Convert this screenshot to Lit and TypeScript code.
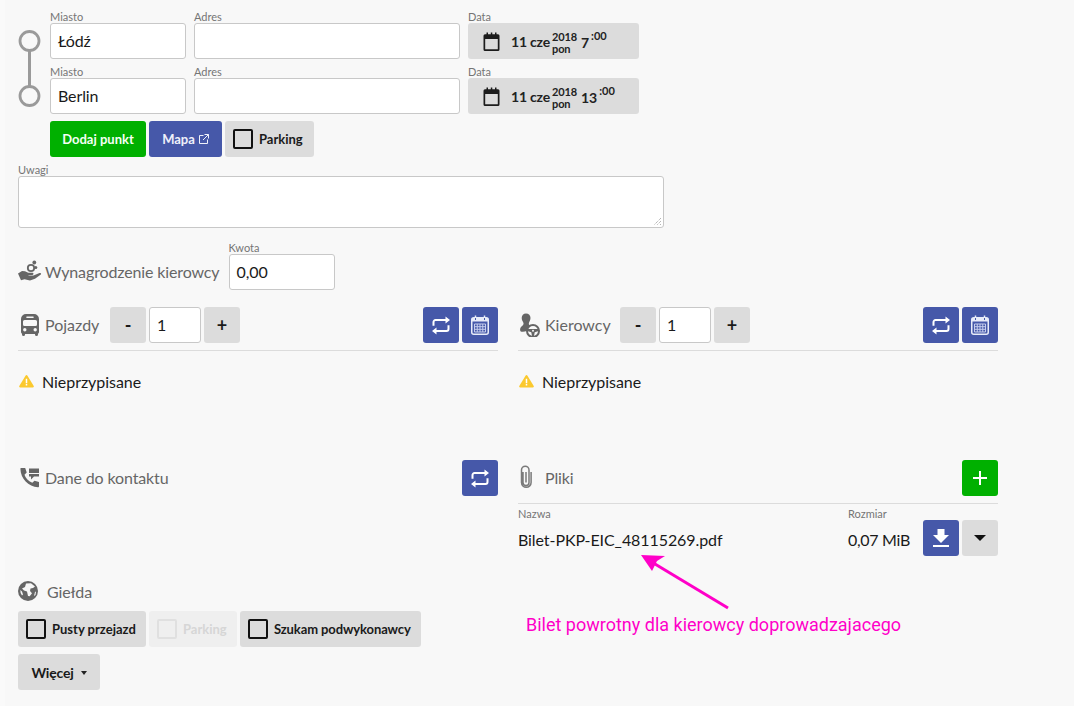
import { LitElement, html, css } from "lit";
import { customElement } from "lit/decorators.js";

const swapIcon = html`<svg class="swap" viewBox="0 0 18 19"><path fill="none" stroke="#fff" stroke-width="2" d="M1.500 9.800V6a2 2 0 0 1 2-2H14M16.500 9.200V13a2 2 0 0 1-2 2H4"/><path fill="#fff" d="M13.500 .5L18 4l-4.500 3.500zM4.500 11.500L0 15l4.500 3.500z"/></svg>`;
const calGridIcon = html`<svg class="grid" viewBox="0 0 18 20"><rect x=".75" y="2.750" width="16.500" height="16.500" rx="2" fill="none" stroke="#e8ebf8" stroke-width="1.500"/><path fill="#e8ebf8" d="M1 3h16v3.500H1z"/><path stroke="#e8ebf8" stroke-width="1.500" d="M4.500 .5v3.500M13.500 .5v3.500"/><path stroke="#4658a9" d="M4.500 3v2M13.500 3v2"/><path fill="none" stroke="#c6cdec" d="M3.500 9h11v8h-11zM3.500 11.700h11M3.500 14.300h11M6.250 9v8M9 9v8M11.750 9v8"/></svg>`;
const calIcon = html`<svg class="cal" viewBox="0 0 17 19"><path fill="#1c1c1c" d="M3.500 .5h1.500v1.700h2.800V.5h1.500v1.700h2.700V.5h1.500v1.700h1.500A1.500 1.500 0 0 1 16.500 3.700v13.800a1.500 1.500 0 0 1-1.500 1.500H2a1.500 1.500 0 0 1-1.500-1.500V3.700A1.500 1.500 0 0 1 2 2.200h1.500zM2.200 7v10.300h12.600V7z"/></svg>`;

@customElement("app-root")
export class AppRoot extends LitElement {
  static styles = css`
    :host { display: block; height: 706px; overflow: hidden; background: #f8f8f8; font-family: Lato, sans-serif; color: #1a1a1a; }
    * { box-sizing: border-box; }
    .page { padding: 11px 0 0 13px; border-left: 5px solid #fafafa; width: 1000px; position: relative; height: 706px; }
    .route { display: flex; }
    .rail { width: 32px; flex: none; padding-top: 19px; display: flex; flex-direction: column; align-items: flex-start; }
    .rail svg { display: block; }
    .rows { display: flex; flex-direction: column; gap: 7px; }
    .row { display: flex; gap: 8px; }
    .lab { display: block; height: 12px; font-size: 11px; line-height: 12px; color: #757575; white-space: nowrap; }
    .inp { height: 36px; background: #fff; border: 1px solid #c8c8c8; border-radius: 3px; font-size: 16px; line-height: 34px; padding-left: 7px; color: #1a1a1a; letter-spacing: -.1px; }
    .miasto { width: 136px; }
    .adres { width: 266px; }
    .date { width: 171px; height: 36px; background: #dcdcdc; border-radius: 3px; display: flex; align-items: center; padding-left: 15px; font-weight: 700; font-size: 14px; color: #222; letter-spacing: -.2px; }
    .cal { width: 17px; height: 19px; margin-right: 11px; flex: none; }
    .yr { display: flex; flex-direction: column; font-size: 11px; line-height: 12px; margin-left: 2px; width: 29px; margin-top: 3px; letter-spacing: -.1px; }
    .hour { font-size: 14px; margin-top: 2px; letter-spacing: 0; }
    .min { font-size: 11px; margin-left: 2px; margin-top: -11px; letter-spacing: 0; }
    .btnrow { display: flex; gap: 3px; margin-top: 7px; }
    .btn { height: 36px; border-radius: 3px; display: flex; align-items: center; justify-content: center; font-weight: 700; font-size: 13px; white-space: nowrap; flex: none; }
    .green { background: #00b000; color: #f4fff4; }
    .blue { background: #4658a9; color: #eef0fa; }
    .grey { background: #dcdcdc; color: #1a1a1a; }
    .dim { background: #efefef; color: #d6d6d6; }
    .box { width: 20px; height: 20px; border: 2px solid #111; border-radius: 2px; margin-right: 6px; flex: none; }
    .dim .box { border-color: #e0e0e0; }
    .check { padding: 0 11px 0 8px; }
    .tight { letter-spacing: -.1px; }
    .sign { font-size: 18px; }
    .uwagi { margin-top: 7px; }
    .area { width: 646px; height: 52px; background: #fff; border: 1px solid #c8c8c8; border-radius: 3px; position: relative; }
    .grip { position: absolute; right: 1px; bottom: 1px; width: 9px; height: 9px; }
    .pay { display: flex; align-items: flex-end; margin-top: 14px; }
    .pay .kw { margin-left: 9px; }
    .kwota { width: 106px; }
    .title { display: flex; align-items: center; font-size: 16px; color: #666; white-space: nowrap; letter-spacing: -.13px; padding-bottom: 2px; }
    .tic { width: 27px; flex: none; display: flex; justify-content: flex-start; }
    .paytitle { height: 36px; }
    .cols { display: grid; grid-template-columns: 480px 480px; column-gap: 20px; margin-top: 17px; }
    .head { display: flex; align-items: center; gap: 3px; height: 36px; }
    .head .count { letter-spacing: 0; }
    .pojazdy { width: 89px; }
    .kierowcy { width: 99px; }
    .sq { width: 36px; }
    .num { width: 52px; }
    .sp { flex: 1; }
    .rule { height: 1px; background: #dcdcdc; margin-top: 7px; }
    .warn { display: flex; align-items: center; height: 20px; margin-top: 20px; font-size: 16px; letter-spacing: -.05px; }
    .warn svg { margin-right: 8px; margin-left: 1px; }
    .secs { display: grid; grid-template-columns: 480px 480px; column-gap: 20px; margin-top: 69px; }
    .files { display: flex; }
    .fname { width: 330px; }
    .fsize { width: 75px; }
    .val { height: 36px; display: flex; align-items: center; font-size: 16px; white-space: nowrap; letter-spacing: -.08px; padding-top: 2px; }
    .fsize .val { letter-spacing: -.3px; }
    .fbtns { display: flex; gap: 3px; margin-top: 16px; }
    .market { margin-top: 25px; }
    .market .title { height: 20px; padding-bottom: 0; }
    .mrow { display: flex; gap: 3px; margin-top: 10px; }
    .mrow .check { padding-right: 10.200px; }
    .more { width: 82px; margin-top: 7px; font-size: 14px; letter-spacing: -.2px; }
    .caret { width: 0; height: 0; border-left: 3.500px solid transparent; border-right: 3.500px solid transparent; border-top: 4px solid #222; margin: 2px 0 0 7px; }
    .caret2 { border-left-width: 6px; border-right-width: 6px; border-top-width: 6px; margin: 0; border-top-color: #111; }
    .swap { width: 18px; height: 19px; }
    .grid { width: 18px; height: 20px; }
    .note { position: absolute; left: 521px; top: 613px; color: #ff00c8; font-family: Roboto, sans-serif; font-size: 18px; line-height: 24px; white-space: nowrap; }
    .arrow { position: absolute; left: 625px; top: 545px; width: 110px; height: 75px; }
  `;

  private rowT(city: string, hour: string) {
    return html`<div class="row">
      <div><span class="lab">Miasto</span><div class="inp miasto">${city}</div></div>
      <div><span class="lab">Adres</span><div class="inp adres"></div></div>
      <div><span class="lab">Data</span><div class="date">${calIcon}<span>11 cze</span>
        <span class="yr"><span>2018</span><span>pon</span></span>
        <span class="hour">${hour}</span><span class="min">:00</span></div></div>
    </div>`;
  }

  private counter(title: string, cls: string, icon: unknown) {
    return html`<div>
      <div class="head">
        <div class="title count ${cls}"><span class="tic">${icon}</span>${title}</div>
        <div class="btn grey sq sign">-</div><div class="inp num">1</div><div class="btn grey sq sign">+</div>
        <div class="sp"></div>
        <div class="btn blue sq">${swapIcon}</div><div class="btn blue sq">${calGridIcon}</div>
      </div>
      <div class="rule"></div>
      <div class="warn"><svg width="15" height="14" viewBox="0 0 16 14"><path fill="#fbc92e" d="M8 .5a1 1 0 0 1 .9.500l6.800 11.300a1 1 0 0 1-.9 1.500H1.200a1 1 0 0 1-.9-1.500L7.100 1A1 1 0 0 1 8 .5z"/><path fill="#fff" d="M7.200 4.500h1.600v4.500H7.200zM7.200 10h1.600v1.700H7.200z"/></svg>Nieprzypisane</div>
    </div>`;
  }

  render() {
    const bus = html`<svg width="22" height="24" viewBox="-2 0 22 24"><path fill="#666" fill-rule="evenodd" d="M6 2h8a5 5 0 0 1 5 5v13a2 2 0 0 1-1 1.700v.8a1.500 1.500 0 0 1-3 0V22H5v.5a1.500 1.500 0 0 1-3 0v-.8A2 2 0 0 1 1 20V7a5 5 0 0 1 5-5zM7 4.500a.8.8 0 0 0 0 1.600h6a.8.8 0 0 0 0-1.600zM4.500 8A1.500 1.500 0 0 0 3 9.500v3A1.500 1.500 0 0 0 4.500 14h11a1.500 1.500 0 0 0 1.500-1.500v-3A1.500 1.500 0 0 0 15.500 8zM4.800 16a1.700 1.700 0 1 0 0 3.400 1.700 1.700 0 0 0 0-3.400zm10.400 0a1.700 1.700 0 1 0 0 3.400 1.700 1.700 0 0 0 0-3.400z"/></svg>`;
    const driver = html`<svg width="24" height="26" viewBox="0 -1 24 26"><path fill="#666" d="M8 1.500c2.800 0 4.500 2 4.500 4.500 0 2.700-1.700 4.200-1.700 5.700 0 .8.500 1.300 1.500 1.700a7.800 7.800 0 0 0-3.300 5.400c-2 .9-4.500 1.100-6.300.6C1.500 18 2 15.500 4 14c1-.8 1.700-1.500 1.500-2.800C5.200 9.500 3.700 8.500 3.700 6c0-2.500 1.700-4.500 4.300-4.500z"/><circle cx="15" cy="19" r="6" fill="none" stroke="#666" stroke-width="2"/><path fill="#666" d="M10 17h10v2.300l-3.300 1-.7 3.700h-2l-.7-3.700-3.300-1z"/><circle cx="15" cy="18.700" r="1" fill="#f8f8f8"/></svg>`;
    const phone = html`<svg width="22" height="21" viewBox="-2 0 22 21"><path fill="#666" d="M1 1h4.200l1.500 4.500-2.200 2.200c.9 3 3.600 6.300 7.800 8l2.200-2 4.500 1.300v4.200c0 .6-.4 1-1 1C8.500 20 .5 11.500.400 1.800.4 1.300.6 1 1 1z"/><path fill="#666" d="M9 1.500h10v8h-5L11 12.500v-3H9z" /><path stroke="#f8f8f8" stroke-width="1" d="M9 6.500h10" /></svg>`;
    const clip = html`<svg width="16" height="24" viewBox="0 0 16 24"><path fill="none" stroke="#7a7a7a" stroke-width="1.500" d="M5 7v10.500a3 3 0 0 0 6 0V5a3.700 3.700 0 0 0-7.500 0v12.500a4.800 4.800 0 0 0 9.600 0V7M8 7v10.500"/></svg>`;
    const globe = html`<svg width="20" height="20" viewBox="0 0 20 20"><circle cx="10" cy="10" r="10" fill="#666"/><path fill="#f8f8f8" d="M8 2.500l5-.3 4 3.300-2 1.500-2.500.5-.5 2.500 2 2.200-2.300 3-1.700-.3-1-4.500L6 9.500 4 7.500l3-1.500zM2.300 9l1.700 1.500 1 3-1 1a8 8 0 0 1-1.700-5.500zM17 11l1-.5-.5 3.500-1.500 1z"/></svg>`;
    const hand = html`<svg width="25" height="24" viewBox="0 0 25 24"><path fill="#666" d="M0 14.500l4-2.500 3 .3 3.200 1.500h4.300c1.300 0 1.300 2 0 2.100l-4 .3v.6l5-.2 6-2.600c1.500-.5 2.200.8 1 1.700l-5.500 4-5 1.800-5.500-1.200-3.500 1z"/><circle cx="13" cy="9" r="3.200" fill="none" stroke="#666" stroke-width="1.800"/><circle cx="17.800" cy="8.500" r="1.500" fill="#666"/><circle cx="16.300" cy="3.500" r="1.900" fill="#666"/></svg>`;
    const download = html`<svg width="18" height="20" viewBox="0 0 18 20"><path fill="#fff" d="M5.500 1h7v6H17l-8 8-8-8h4.500zM1 17h16v2H1z"/></svg>`;
    const plus = html`<svg width="16" height="16" viewBox="0 0 16 16"><path fill="#fff" d="M7 1h2v6h6v2H9v6H7V9H1V7h6z"/></svg>`;
    const extl = html`<svg class="ext" width="10" height="10" viewBox="0 0 10 10"><path fill="none" stroke="#eef0fa" d="M4.500 1.500H.5v8h8V5.500M5.500.5h4v4M9.500.5l-5.500 5.500"/></svg>`;
    return html`<div class="page">
      <div class="route">
        <div class="rail"><svg width="24" height="82" viewBox="0 0 24 82"><path stroke="#9a9a9a" stroke-width="3" d="M11.500 20v36"/><circle cx="11.500" cy="11" r="9.500" fill="none" stroke="#9a9a9a" stroke-width="2.800"/><circle cx="11.500" cy="66" r="9.500" fill="none" stroke="#9a9a9a" stroke-width="2.800"/></svg></div>
        <div>
          <div class="rows">${this.rowT("Łódź", "7")}${this.rowT("Berlin", "13")}</div>
          <div class="btnrow">
            <div class="btn green" style="width:96px">Dodaj punkt</div>
            <div class="btn blue" style="width:73px;gap:4px">Mapa${extl}</div>
            <div class="btn grey check"><span class="box"></span>Parking</div>
          </div>
        </div>
      </div>
      <div class="uwagi"><span class="lab">Uwagi</span><div class="area"><svg class="grip" viewBox="0 0 9 9"><path stroke="#999" stroke-dasharray="1 1" d="M8 1L1 8M8 4L4 8M8 7L7 8"/></svg></div></div>
      <div class="pay">
        <div class="title paytitle"><span class="tic">${hand}</span>Wynagrodzenie kierowcy</div>
        <div class="kw"><span class="lab">Kwota</span><div class="inp kwota">0,00</div></div>
      </div>
      <div class="cols">${this.counter("Pojazdy", "pojazdy", bus)}${this.counter("Kierowcy", "kierowcy", driver)}</div>
      <div class="secs">
        <div>
          <div class="head"><div class="title"><span class="tic">${phone}</span>Dane do kontaktu</div><div class="sp"></div><div class="btn blue sq">${swapIcon}</div></div>
        </div>
        <div>
          <div class="head"><div class="title"><span class="tic">${clip}</span>Pliki</div><div class="sp"></div><div class="btn green sq">${plus}</div></div>
          <div class="rule"></div>
          <div class="files">
            <div class="fname"><span class="lab" style="margin-top:4px">Nazwa</span><div class="val">Bilet-PKP-EIC_48115269.pdf</div></div>
            <div class="fsize"><span class="lab" style="margin-top:4px">Rozmiar</span><div class="val">0,07 MiB</div></div>
            <div class="fbtns"><div class="btn blue sq">${download}</div><div class="btn grey sq"><span class="caret caret2"></span></div></div>
          </div>
        </div>
      </div>
      <div class="market">
        <div class="title"><span class="tic" style="width:29px">${globe}</span>Giełda</div>
        <div class="mrow">
          <div class="btn grey check"><span class="box"></span>Pusty przejazd</div>
          <div class="btn dim check"><span class="box"></span>Parking</div>
          <div class="btn grey check tight"><span class="box"></span>Szukam podwykonawcy</div>
        </div>
        <div class="btn grey more">Więcej<span class="caret"></span></div>
      </div>
      <svg class="arrow" viewBox="0 0 110 75"><path stroke="#ff00c8" stroke-width="3" d="M98 63L20 16"/><path fill="#ff00c8" d="M11 10l24 1-8 5-5 10z"/></svg>
      <div class="note">Bilet powrotny dla kierowcy doprowadzajacego</div>
    </div>`;
  }
}
